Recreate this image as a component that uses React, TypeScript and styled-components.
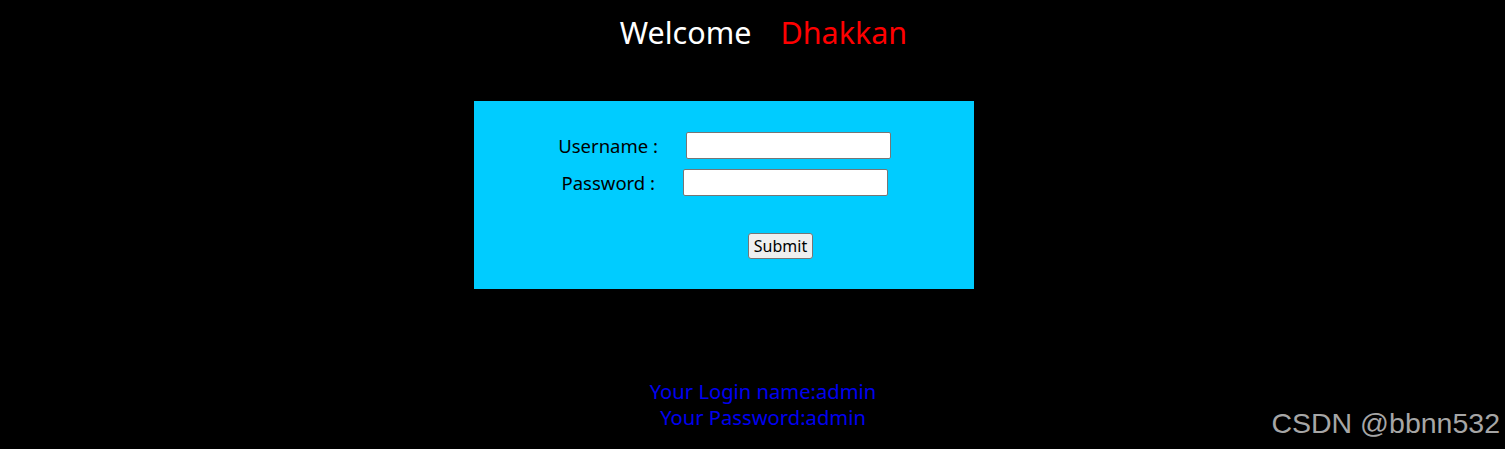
import React from "react";
import styled, { createGlobalStyle } from "styled-components";

const GlobalStyle = createGlobalStyle`
  html, body {
    margin: 0;
    padding: 0;
    background: #000;
  }
  body {
    font-family: "Noto Sans", "Open Sans", sans-serif;
  }
`;

const Page = styled.div`
  position: relative;
  width: 1505px;
  height: 449px;
  background: #000;
  overflow: hidden;
  display: flex;
  flex-direction: column;
`;

const Title = styled.div`
  margin-top: 10px;
  padding-left: 22px;
  display: flex;
  justify-content: center;
  gap: 29px;
  font-size: 30.5px;
  line-height: 44px;
  color: #fff;
`;

const Name = styled.span`
  color: #ff0000;
`;

const LoginBox = styled.form`
  margin: 47px 0 0 474px;
  width: 500px;
  height: 188px;
  background: #00ccff;
  box-sizing: border-box;
  padding-top: 31px;
  display: flex;
  flex-direction: column;
`;

const Fields = styled.div`
  display: grid;
  grid-template-columns: 212px 288px;
  row-gap: 10px;
`;

const Label = styled.label<{ $shift?: number }>`
  justify-self: end;
  margin-right: ${(p) => 28 + (p.$shift ?? 0)}px;
  font-size: 18.5px;
  line-height: 27px;
  color: #000;
`;

const Input = styled.input<{ $shift?: number }>`
  margin-left: ${(p) => p.$shift ?? 0}px;
  width: 205px;
  height: 27px;
  box-sizing: border-box;
  border: 1px solid #767676;
  border-radius: 2px;
  background: #fff;
  padding: 0 4px;
`;

const Submit = styled.button`
  align-self: flex-start;
  margin: 37px 0 0 274px;
  width: 65px;
  height: 26px;
  box-sizing: border-box;
  padding: 0;
  border: 1px solid #767676;
  border-radius: 3px;
  background: #efefef;
  font-family: "Noto Sans", sans-serif;
  font-size: 16px;
  color: #000;
`;

const Info = styled.div`
  margin-top: 89px;
  padding-left: 21px;
  text-align: center;
  font-size: 20.2px;
  line-height: 26px;
  color: #0000f0;
`;

const Watermark = styled.div`
  position: absolute;
  right: 5px;
  bottom: 9px;
  font-family: "Liberation Sans", Arial, sans-serif;
  font-size: 28.5px;
  color: #a6a6a6;
`;

export default function App() {
  return (
    <>
      <GlobalStyle />
      <Page>
        <Title>
          <span>Welcome</span>
          <Name>Dhakkan</Name>
        </Title>
        <LoginBox onSubmit={(e) => e.preventDefault()}>
          <Fields>
            <Label>Username :</Label>
            <Input type="text" $shift={0} />
            <Label $shift={3}>Password :</Label>
            <Input type="password" $shift={-3} />
          </Fields>
          <Submit type="submit">Submit</Submit>
        </LoginBox>
        <Info>
          Your Login name:admin
          <br />
          Your Password:admin
        </Info>
        <Watermark>CSDN @bbnn532</Watermark>
      </Page>
    </>
  );
}
